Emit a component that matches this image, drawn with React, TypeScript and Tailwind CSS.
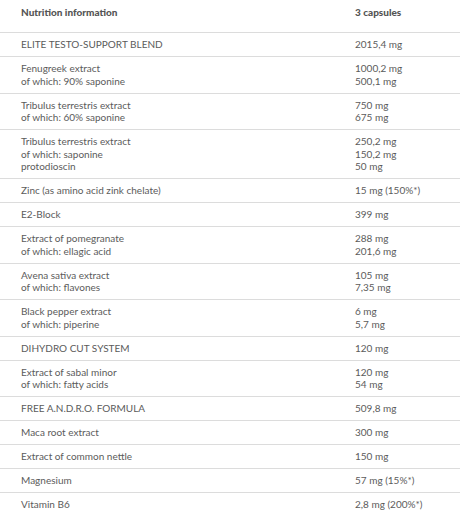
import React from "react";

type Row = { name: string[]; value: string[] };

const rows: Row[] = [
  { name: ["ELITE TESTO-SUPPORT BLEND"], value: ["2015,4 mg"] },
  { name: ["Fenugreek extract", "of which: 90% saponine"], value: ["1000,2 mg", "500,1 mg"] },
  { name: ["Tribulus terrestris extract", "of which: 60% saponine"], value: ["750 mg", "675 mg"] },
  {
    name: ["Tribulus terrestris extract", "of which: saponine", "protodioscin"],
    value: ["250,2 mg", "150,2 mg", "50 mg"],
  },
  { name: ["Zinc (as amino acid zink chelate)"], value: ["15 mg (150%*)"] },
  { name: ["E2-Block"], value: ["399 mg"] },
  { name: ["Extract of pomegranate", "of which: ellagic acid"], value: ["288 mg", "201,6 mg"] },
  { name: ["Avena sativa extract", "of which: flavones"], value: ["105 mg", "7,35 mg"] },
  { name: ["Black pepper extract", "of which: piperine"], value: ["6 mg", "5,7 mg"] },
  { name: ["DIHYDRO CUT SYSTEM"], value: ["120 mg"] },
  { name: ["Extract of sabal minor", "of which: fatty acids"], value: ["120 mg", "54 mg"] },
  { name: ["FREE A.N.D.R.O. FORMULA"], value: ["509,8 mg"] },
  { name: ["Maca root extract"], value: ["300 mg"] },
  { name: ["Extract of common nettle"], value: ["150 mg"] },
  { name: ["Magnesium"], value: ["57 mg (15%*)"] },
  { name: ["Vitamin B6"], value: ["2,8 mg (200%*)"] },
];

export default function App() {
  return (
    <div className="w-[460px] h-[519px] bg-white overflow-hidden text-[#5b5b5b] text-[10px] leading-[12.5px] [font-family:Lato,'Liberation_Sans',sans-serif]">
      <div className="flex h-[33px] pt-[5.5px] border-b border-[#dcdcdc] font-black text-[#555]">
        <div className="w-[355px] pl-[21px]">Nutrition information</div>
        <div className="flex-1">3 capsules</div>
      </div>
      {rows.map((r, i) => (
        <div
          key={i}
          className={
            i === rows.length - 1
              ? "flex py-[5.25px]"
              : "flex py-[5.25px] border-b border-[#dcdcdc]"
          }
        >
          <div className="w-[355px] pl-[21px] flex flex-col">
            {r.name.map((n, j) => (
              <span key={j}>{n}</span>
            ))}
          </div>
          <div className="flex-1 flex flex-col">
            {r.value.map((v, j) => (
              <span key={j}>{v}</span>
            ))}
          </div>
        </div>
      ))}
    </div>
  );
}
